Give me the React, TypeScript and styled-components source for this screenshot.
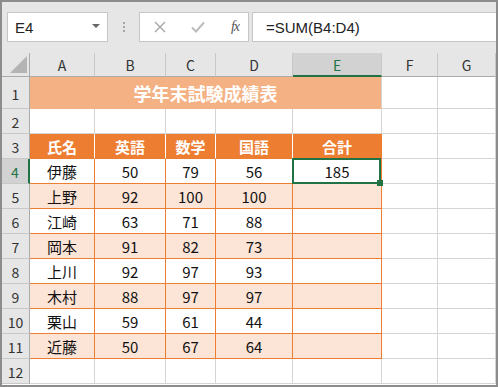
import styled, { createGlobalStyle } from "styled-components";

const GlobalStyle = createGlobalStyle`
  html, body {
    margin: 0;
    padding: 0;
    overflow: hidden;
    background: #ffffff;
  }
  * {
    box-sizing: border-box;
  }
`;

const Frame = styled.div`
  width: 498px;
  height: 387px;
  border: 2px solid #8c8c8c;
  background: #e6e6e6;
  display: flex;
  flex-direction: column;
  overflow: hidden;
  font-family: "Noto Sans CJK JP", "Noto Sans", sans-serif;
`;

const FormulaBar = styled.div`
  height: 51px;
  flex-shrink: 0;
  display: flex;
  align-items: flex-start;
  padding: 10px 0 0 5px;
`;

const NameBox = styled.div`
  width: 101px;
  height: 30px;
  background: #ffffff;
  border: 1px solid #c6c6c6;
  display: flex;
  align-items: center;
  justify-content: space-between;
  padding: 0 7px 0 7px;
  font-family: "Liberation Sans", sans-serif;
  font-size: 15px;
  color: #222;
`;

const DropArrow = styled.span`
  width: 0;
  height: 0;
  border-left: 4px solid transparent;
  border-right: 4px solid transparent;
  border-top: 4px solid #666;
  margin-top: -2px;
`;

const Dots = styled.div`
  width: 2px;
  margin: 10px 14px 0 15px;
  display: flex;
  flex-direction: column;
  gap: 2px;

  span {
    width: 2px;
    height: 2px;
    background: #a6a6a6;
  }
`;

const IconBox = styled.div`
  width: 110px;
  height: 30px;
  background: #ffffff;
  border: 1px solid #c6c6c6;
  display: flex;
  align-items: center;
  justify-content: space-between;
  padding: 0 9px 0 14px;
`;

const Fx = styled.span`
  font-family: "Liberation Serif", serif;
  font-style: italic;
  font-size: 14px;
  color: #555;
  letter-spacing: -1px;
`;

const FormulaInput = styled.div`
  flex: 1;
  height: 30px;
  margin-left: 3px;
  background: #ffffff;
  border: 1px solid #c6c6c6;
  border-right: none;
  display: flex;
  align-items: center;
  padding-left: 13px;
  font-family: "Liberation Sans", sans-serif;
  font-size: 15px;
  color: #222;
`;

const Sheet = styled.div`
  flex: 1;
  display: grid;
  grid-template-columns: 28px 65px 71px 50px 77px 89px 56px 1fr;
  grid-template-rows: 24px 32px repeat(11, 25px);
  background: #ffffff;
`;

const Corner = styled.div`
  background: #e6e6e6;
  border-right: 1px solid #ababab;
  border-bottom: 1px solid #ababab;
  display: flex;
  align-items: flex-end;
  justify-content: flex-end;
  padding: 0 2px 3px 0;
`;

const Triangle = styled.span`
  width: 0;
  height: 0;
  border-left: 17px solid transparent;
  border-bottom: 17px solid #b4b4b4;
`;

const ColHeader = styled.div<{ $active?: boolean }>`
  background: ${(p) => (p.$active ? "#d2d2d2" : "#e6e6e6")};
  border-right: 1px solid #c8c8c8;
  border-bottom: ${(p) => (p.$active ? "2px solid #217346" : "1px solid #ababab")};
  display: flex;
  align-items: center;
  justify-content: center;
  font-size: 14px;
  line-height: 1;
  padding-top: 1px;
  color: ${(p) => (p.$active ? "#217346" : "#333")};
`;

const RowHeader = styled.div<{ $active?: boolean }>`
  background: ${(p) => (p.$active ? "#d2d2d2" : "#e6e6e6")};
  border-bottom: 1px solid #c8c8c8;
  border-right: ${(p) => (p.$active ? "2px solid #217346" : "1px solid #ababab")};
  display: flex;
  align-items: center;
  justify-content: center;
  font-size: 14px;
  line-height: 1;
  padding-top: 2px;
  color: ${(p) => (p.$active ? "#217346" : "#333")};
`;

type Kind = "plain" | "title" | "head" | "white" | "band";

const fills: Record<Kind, string> = {
  plain: "#ffffff",
  title: "#f4b183",
  head: "#ed7d31",
  white: "#ffffff",
  band: "#fce4d6",
};

const Cell = styled.div<{ $kind: Kind; $span?: number; $edge?: boolean }>`
  position: relative;
  grid-column: ${(p) => (p.$span ? `span ${p.$span}` : "auto")};
  background: ${(p) => fills[p.$kind]};
  border-right: 1px solid
    ${(p) =>
      p.$kind === "plain"
        ? "#d4d4d4"
        : p.$kind === "title"
        ? "#d4d4d4"
        : p.$kind === "head" && !p.$edge
        ? "#ffffff"
        : "#ed7d31"};
  border-bottom: 1px solid
    ${(p) =>
      p.$kind === "plain" ? "#d4d4d4" : p.$kind === "title" ? "#f4b183" : "#ed7d31"};
  display: flex;
  align-items: center;
  justify-content: center;
  font-size: ${(p) => (p.$kind === "title" ? "18px" : "15px")};
  font-weight: ${(p) => (p.$kind === "title" || p.$kind === "head" ? 700 : 400)};
  color: ${(p) => (p.$kind === "title" || p.$kind === "head" ? "#ffffff" : "#111")};
  line-height: 1;
  padding-top: 1px;
`;

const Selection = styled.div`
  position: absolute;
  z-index: 5;
  top: -1px;
  left: -1px;
  right: 0;
  bottom: -1px;
  border: 2px solid #217346;
  pointer-events: none;
`;

const Handle = styled.span`
  position: absolute;
  right: -4px;
  bottom: -4px;
  width: 6px;
  height: 6px;
  background: #217346;
`;

const columns = ["A", "B", "C", "D", "E", "F", "G"];

const heads = ["氏名", "英語", "数学", "国語", "合計"];

const rows: [string, number, number, number, string][] = [
  ["伊藤", 50, 79, 56, "185"],
  ["上野", 92, 100, 100, ""],
  ["江崎", 63, 71, 88, ""],
  ["岡本", 91, 82, 73, ""],
  ["上川", 92, 97, 93, ""],
  ["木村", 88, 97, 97, ""],
  ["栗山", 59, 61, 44, ""],
  ["近藤", 50, 67, 64, ""],
];

function CrossIcon() {
  return (
    <svg width="12" height="12" viewBox="0 0 12 12">
      <path d="M1 1 L11 11 M11 1 L1 11" stroke="#a6a6a6" strokeWidth="1.4" fill="none" />
    </svg>
  );
}

function CheckIcon() {
  return (
    <svg width="14" height="12" viewBox="0 0 14 12">
      <path d="M1 6.5 L5 10.5 L13 1.5" stroke="#bdbdbd" strokeWidth="2" fill="none" />
    </svg>
  );
}

export default function App() {
  return (
    <>
      <GlobalStyle />
      <Frame>
        <FormulaBar>
          <NameBox>
            E4
            <DropArrow />
          </NameBox>
          <Dots>
            <span />
            <span />
            <span />
          </Dots>
          <IconBox>
            <CrossIcon />
            <CheckIcon />
            <Fx>fx</Fx>
          </IconBox>
          <FormulaInput>=SUM(B4:D4)</FormulaInput>
        </FormulaBar>
        <Sheet>
          <Corner>
            <Triangle />
          </Corner>
          {columns.map((c) => (
            <ColHeader key={c} $active={c === "E"}>
              {c}
            </ColHeader>
          ))}

          <RowHeader>1</RowHeader>
          <Cell $kind="title" $span={5}>
            学年末試験成績表
          </Cell>
          <Cell $kind="plain" />
          <Cell $kind="plain" />

          <RowHeader>2</RowHeader>
          {columns.map((c) => (
            <Cell key={c} $kind="plain" />
          ))}

          <RowHeader>3</RowHeader>
          {heads.map((h, i) => (
            <Cell key={h} $kind="head" $edge={i === heads.length - 1}>
              {h}
            </Cell>
          ))}
          <Cell $kind="plain" />
          <Cell $kind="plain" />

          {rows.map((r, i) => {
            const kind: Kind = i % 2 === 0 ? "white" : "band";
            return [
              <RowHeader key={`h${i}`} $active={i === 0}>
                {i + 4}
              </RowHeader>,
              ...r.map((v, j) => (
                <Cell key={`${i}-${j}`} $kind={kind}>
                  {v}
                  {i === 0 && j === 4 && (
                    <Selection>
                      <Handle />
                    </Selection>
                  )}
                </Cell>
              )),
              <Cell key={`${i}-f`} $kind="plain" />,
              <Cell key={`${i}-g`} $kind="plain" />,
            ];
          })}

          <RowHeader>12</RowHeader>
          {columns.map((c) => (
            <Cell key={c} $kind="plain" />
          ))}
        </Sheet>
      </Frame>
    </>
  );
}
